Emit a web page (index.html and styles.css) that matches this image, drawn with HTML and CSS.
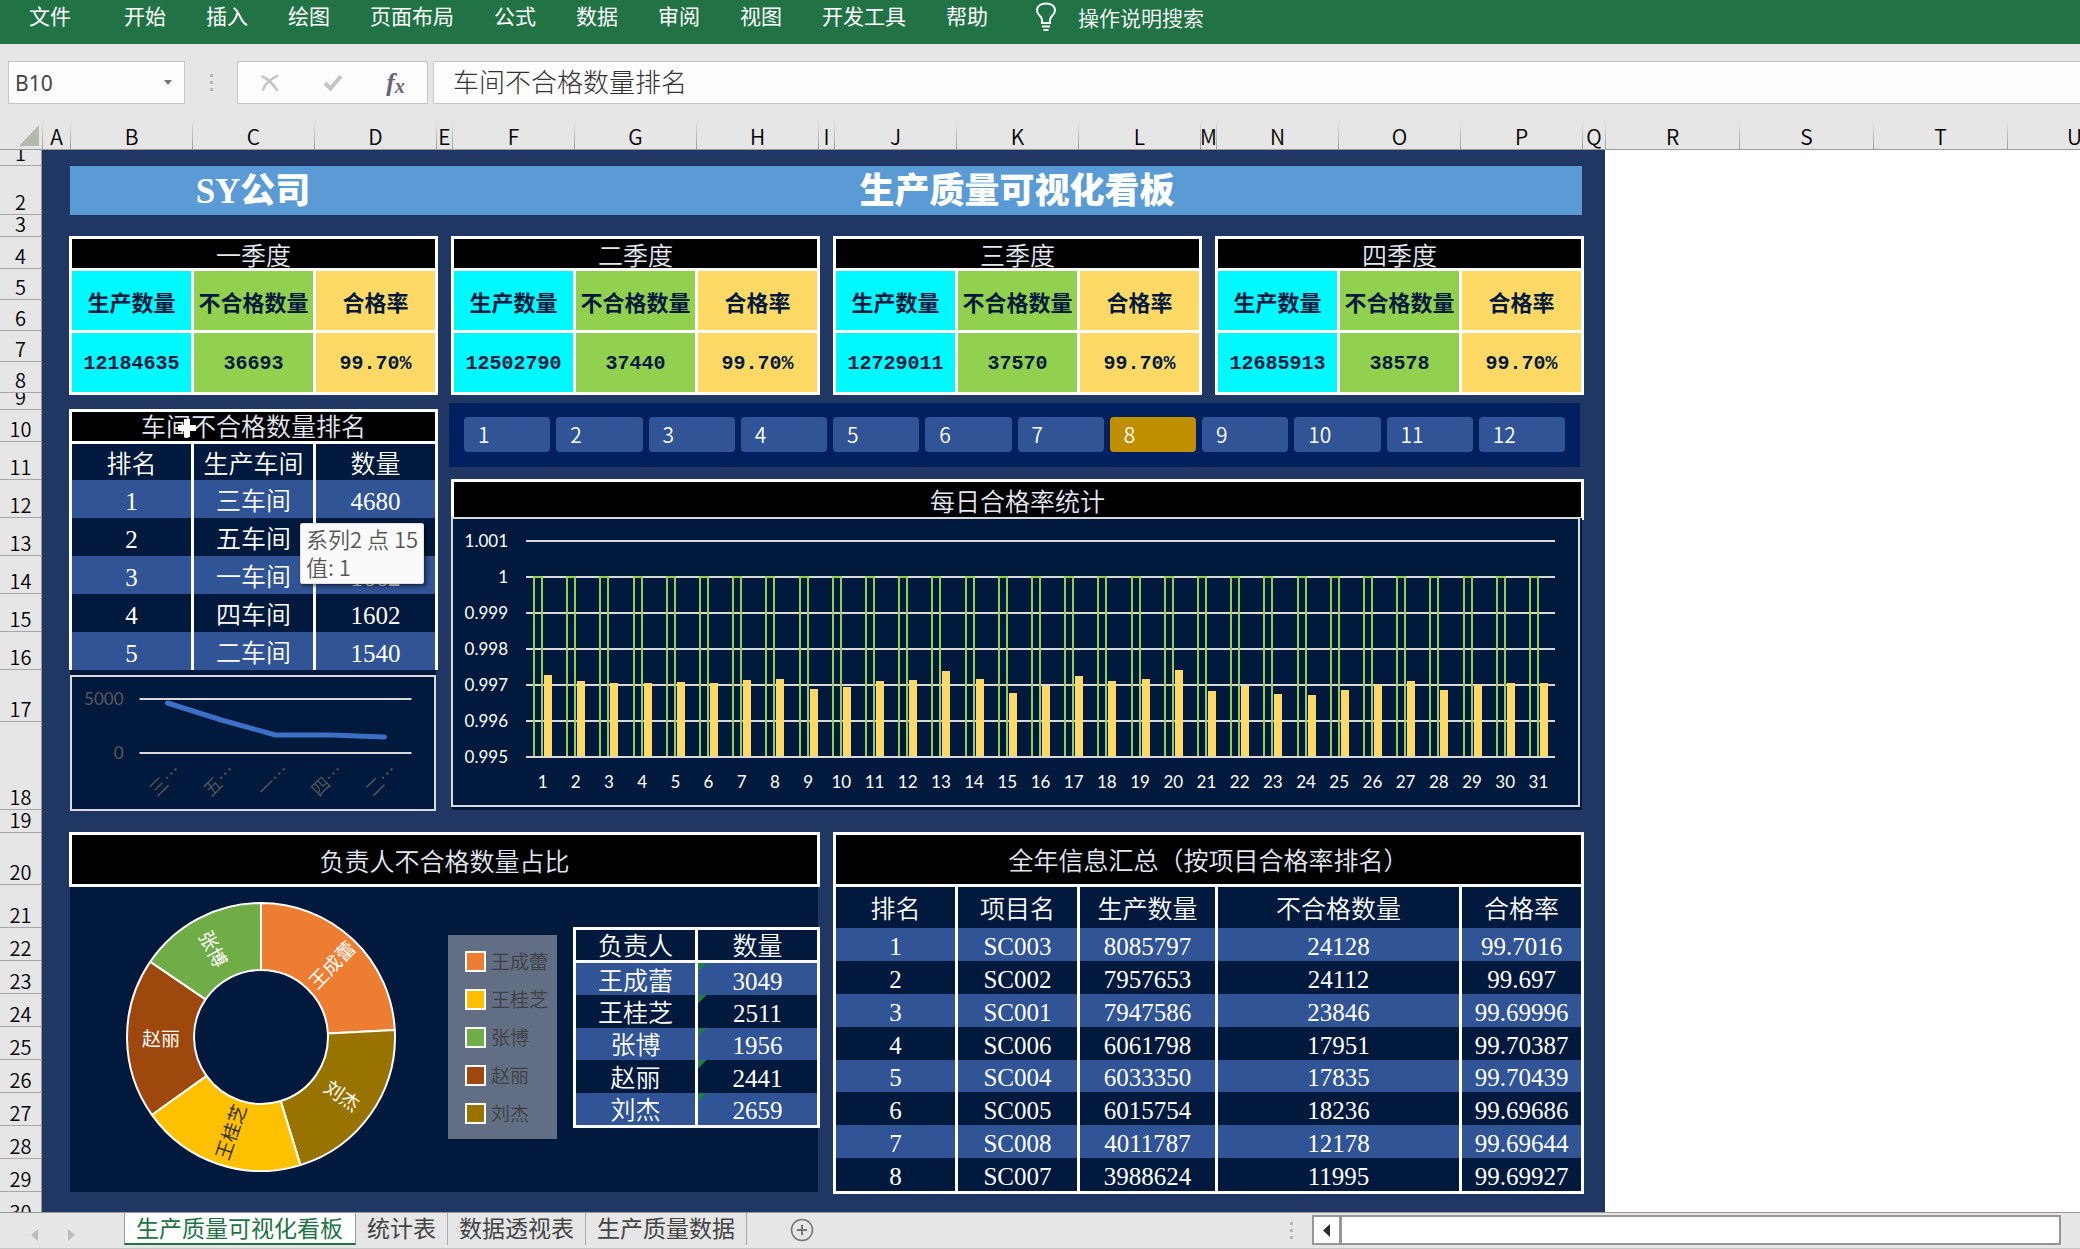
FILE: index.html
```html
<!DOCTYPE html>
<html lang="zh-CN">
<head>
<meta charset="utf-8">
<title>生产质量可视化看板</title>
<link rel="stylesheet" href="styles.css">
</head>
<body>
<nav class="ribbon" aria-label="功能区">
  <button class="file" type="button">文件</button>
  <button type="button">开始</button>
  <button type="button">插入</button>
  <button type="button">绘图</button>
  <button type="button">页面布局</button>
  <button type="button">公式</button>
  <button type="button">数据</button>
  <button type="button">审阅</button>
  <button type="button">视图</button>
  <button type="button">开发工具</button>
  <button type="button">帮助</button>
  <button class="tell-me" type="button">
    <svg width="22" height="30" viewBox="0 0 22 30" fill="none" stroke="#fff" stroke-width="2"><path d="M7 21v-3C7 14 2 13 2 8.500C2 4 6 1.500 11 1.500S20 4 20 8.500C20 13 15 14 15 18v3zM7 24.500h8M8.500 28h5"/></svg>
    操作说明搜索
  </button>
</nav>

<div class="formula-bar">
  <div class="name-box">
    <input type="text" value="B10" aria-label="名称框">
    <svg width="8" height="5" viewBox="0 0 8 5"><path d="M0 0h8L4 5z" fill="#777"/></svg>
  </div>
  <div class="dots"><i></i><i></i><i></i></div>
  <div class="fx-box">
    <button type="button" aria-label="取消"><svg width="18" height="18" viewBox="0 0 18 18" fill="none" stroke="#c4c4c4" stroke-linecap="round"><path d="M1.500 2.500C7 5 12 10 16 16" stroke-width="2.500"/><path d="M16 2C10 5 4 10 2 15.500" stroke-width="2.500"/></svg></button>
    <button type="button" aria-label="输入"><svg width="20" height="18" viewBox="0 0 20 18" fill="none" stroke="#c4c4c4" stroke-width="4"><path d="M2 9l5.500 5.500L18 2"/></svg></button>
    <button class="fx" type="button" aria-label="插入函数">f<small>x</small></button>
  </div>
  <input class="formula" type="text" value="车间不合格数量排名" aria-label="编辑栏">
</div>

<main class="viewport">
<div class="sheet">
  <div class="corner"><svg width="20" height="21" viewBox="0 0 20 21"><path d="M20 0v21H0z" fill="#b3b9af"/></svg></div>
  <div class="col">A</div><div class="col">B</div><div class="col">C</div><div class="col">D</div><div class="col">E</div><div class="col">F</div><div class="col">G</div><div class="col">H</div><div class="col">I</div><div class="col">J</div><div class="col">K</div><div class="col">L</div><div class="col">M</div><div class="col">N</div><div class="col">O</div><div class="col">P</div><div class="col">Q</div><div class="col">R</div><div class="col">S</div><div class="col">T</div><div class="col">U</div>
  <div class="rows">
    <div>1</div><div>2</div><div>3</div><div>4</div><div>5</div><div>6</div><div>7</div><div>8</div><div>9</div><div>10</div><div>11</div><div>12</div><div>13</div><div>14</div><div>15</div><div>16</div><div>17</div><div>18</div><div>19</div><div>20</div><div>21</div><div>22</div><div>23</div><div>24</div><div>25</div><div>26</div><div>27</div><div>28</div><div>29</div><div>30</div>
  </div>

  <div class="board"></div>
  <header class="banner"><h2>SY公司</h2><h1>生产质量可视化看板</h1></header>

  <section class="quarter q1"><table>
    <tr><th class="cap" colspan="3">一季度</th></tr>
    <tr><th class="out">生产数量</th><th class="bad">不合格数量</th><th class="rate">合格率</th></tr>
    <tr><td class="out">12184635</td><td class="bad">36693</td><td class="rate">99.70%</td></tr>
  </table></section>
  <section class="quarter q2"><table>
    <tr><th class="cap" colspan="3">二季度</th></tr>
    <tr><th class="out">生产数量</th><th class="bad">不合格数量</th><th class="rate">合格率</th></tr>
    <tr><td class="out">12502790</td><td class="bad">37440</td><td class="rate">99.70%</td></tr>
  </table></section>
  <section class="quarter q3"><table>
    <tr><th class="cap" colspan="3">三季度</th></tr>
    <tr><th class="out">生产数量</th><th class="bad">不合格数量</th><th class="rate">合格率</th></tr>
    <tr><td class="out">12729011</td><td class="bad">37570</td><td class="rate">99.70%</td></tr>
  </table></section>
  <section class="quarter q4"><table>
    <tr><th class="cap" colspan="3">四季度</th></tr>
    <tr><th class="out">生产数量</th><th class="bad">不合格数量</th><th class="rate">合格率</th></tr>
    <tr><td class="out">12685913</td><td class="bad">38578</td><td class="rate">99.70%</td></tr>
  </table></section>

  <section class="ranking"><table class="grid-table">
    <thead>
      <tr class="cap"><th colspan="3">车间不合格数量排名</th></tr>
      <tr><th>排名</th><th>生产车间</th><th>数量</th></tr>
    </thead>
    <tbody>
      <tr><td>1</td><td>三车间</td><td>4680</td></tr>
      <tr><td>2</td><td>五车间</td><td>3132</td></tr>
      <tr><td>3</td><td>一车间</td><td>1662</td></tr>
      <tr><td>4</td><td>四车间</td><td>1602</td></tr>
      <tr><td>5</td><td>二车间</td><td>1540</td></tr>
    </tbody>
  </table></section>

  <section class="trend">
    <svg viewBox="0 0 361 132" role="img" aria-label="车间不合格数量折线图">
      <path d="M67 22h272M67 76h272" stroke="#d9d9d9" stroke-width="2"/>
      <path d="M95 26L149 43L203 58H258L312 60" fill="none" stroke="#3d6fc6" stroke-width="5" stroke-linecap="round" stroke-linejoin="round"/>
      <g class="trend-y"><text x="51" y="28">5000</text><text x="51" y="82">0</text></g>
      <g class="trend-x">
        <text transform="translate(110 95) rotate(-45)">三…</text>
        <text transform="translate(164 95) rotate(-45)">五…</text>
        <text transform="translate(218 95) rotate(-45)">一…</text>
        <text transform="translate(272 95) rotate(-45)">四…</text>
        <text transform="translate(326 95) rotate(-45)">二…</text>
      </g>
    </svg>
  </section>

  <div class="slicer" role="group" aria-label="月份">
    <button type="button">1</button><button type="button">2</button><button type="button">3</button><button type="button">4</button><button type="button">5</button><button type="button">6</button><button type="button">7</button><button type="button" class="on">8</button><button type="button">9</button><button type="button">10</button><button type="button">11</button><button type="button">12</button>
  </div>

  <h3 class="panel-title daily-title">每日合格率统计</h3>
  <section class="daily">
    <div class="daily-chart">
      <ol class="y-axis"><li>1.001</li><li>1</li><li>0.999</li><li>0.998</li><li>0.997</li><li>0.996</li><li>0.995</li></ol>
      <div class="plot">
        <div><i></i><b style="height:81px"></b></div>
        <div><i></i><b style="height:75px"></b></div>
        <div><i></i><b style="height:73px"></b></div>
        <div><i></i><b style="height:73px"></b></div>
        <div><i></i><b style="height:74px"></b></div>
        <div><i></i><b style="height:73px"></b></div>
        <div><i></i><b style="height:76px"></b></div>
        <div><i></i><b style="height:77px"></b></div>
        <div><i></i><b style="height:67px"></b></div>
        <div><i></i><b style="height:69px"></b></div>
        <div><i></i><b style="height:75px"></b></div>
        <div><i></i><b style="height:76px"></b></div>
        <div><i></i><b style="height:85px"></b></div>
        <div><i></i><b style="height:77px"></b></div>
        <div><i></i><b style="height:63px"></b></div>
        <div><i></i><b style="height:70px"></b></div>
        <div><i></i><b style="height:80px"></b></div>
        <div><i></i><b style="height:75px"></b></div>
        <div><i></i><b style="height:77px"></b></div>
        <div><i></i><b style="height:86px"></b></div>
        <div><i></i><b style="height:65px"></b></div>
        <div><i></i><b style="height:70px"></b></div>
        <div><i></i><b style="height:62px"></b></div>
        <div><i></i><b style="height:61px"></b></div>
        <div><i></i><b style="height:66px"></b></div>
        <div><i></i><b style="height:71px"></b></div>
        <div><i></i><b style="height:75px"></b></div>
        <div><i></i><b style="height:66px"></b></div>
        <div><i></i><b style="height:71px"></b></div>
        <div><i></i><b style="height:73px"></b></div>
        <div><i></i><b style="height:73px"></b></div>
      </div>
      <ol class="x-axis"><li>1</li><li>2</li><li>3</li><li>4</li><li>5</li><li>6</li><li>7</li><li>8</li><li>9</li><li>10</li><li>11</li><li>12</li><li>13</li><li>14</li><li>15</li><li>16</li><li>17</li><li>18</li><li>19</li><li>20</li><li>21</li><li>22</li><li>23</li><li>24</li><li>25</li><li>26</li><li>27</li><li>28</li><li>29</li><li>30</li><li>31</li></ol>
    </div>
  </section>

  <h3 class="panel-title share-title">负责人不合格数量占比</h3>
  <section class="share">
    <svg class="donut" width="270" height="270" viewBox="-135 -135 270 270" role="img" aria-label="负责人不合格数量占比圆环图">
      <g stroke="#fff" stroke-width="2" stroke-linejoin="round">
        <path fill="#ed7d31" d="M0-134A134 134 0 0 1 133.800-7L66.900-3.500A67 67 0 0 0 0-67z"/>
        <path fill="#997300" d="M133.800-7A134 134 0 0 1 39.400 128.100L19.700 64A67 67 0 0 0 66.900-3.500z"/>
        <path fill="#ffc000" d="M39.400 128.100A134 134 0 0 1-109.100 77.800L-54.500 38.900A67 67 0 0 0 19.700 64z"/>
        <path fill="#9e480e" d="M-109.100 77.800A134 134 0 0 1-110.800-75.300L-55.400-37.700A67 67 0 0 0-54.500 38.900z"/>
        <path fill="#70ad47" d="M-110.800-75.300A134 134 0 0 1 0-134V-67A67 67 0 0 0-55.400-37.700z"/>
      </g>
      <g class="donut-labels">
        <text transform="translate(71 -72) rotate(-46)" y="7">王成蕾</text>
        <text transform="translate(81 59) rotate(35)" y="7">刘杰</text>
        <text class="dark" transform="translate(-30 95) rotate(-71)" y="7">王桂芝</text>
        <text transform="translate(-100 2)" y="7">赵丽</text>
        <text transform="translate(-48 -88) rotate(62)" y="7">张博</text>
      </g>
    </svg>
    <ul class="legend">
      <li class="c1">王成蕾</li><li class="c2">王桂芝</li><li class="c3">张博</li><li class="c4">赵丽</li><li class="c5">刘杰</li>
    </ul>
  </section>
  <section class="people"><table class="grid-table">
    <thead><tr><th>负责人</th><th>数量</th></tr></thead>
    <tbody>
      <tr><td>王成蕾</td><td>3049</td></tr>
      <tr><td>王桂芝</td><td>2511</td></tr>
      <tr><td>张博</td><td>1956</td></tr>
      <tr><td>赵丽</td><td>2441</td></tr>
      <tr><td>刘杰</td><td>2659</td></tr>
    </tbody>
  </table></section>

  <section class="summary"><table class="grid-table">
    <colgroup><col class="w1"><col class="w1"><col class="w2"><col class="w3"><col class="w4"></colgroup>
    <thead>
      <tr class="cap"><th colspan="5">全年信息汇总（按项目合格率排名）</th></tr>
      <tr><th>排名</th><th>项目名</th><th>生产数量</th><th>不合格数量</th><th>合格率</th></tr>
    </thead>
    <tbody>
      <tr><td>1</td><td>SC003</td><td>8085797</td><td>24128</td><td>99.7016</td></tr>
      <tr><td>2</td><td>SC002</td><td>7957653</td><td>24112</td><td>99.697</td></tr>
      <tr><td>3</td><td>SC001</td><td>7947586</td><td>23846</td><td>99.69996</td></tr>
      <tr><td>4</td><td>SC006</td><td>6061798</td><td>17951</td><td>99.70387</td></tr>
      <tr><td>5</td><td>SC004</td><td>6033350</td><td>17835</td><td>99.70439</td></tr>
      <tr><td>6</td><td>SC005</td><td>6015754</td><td>18236</td><td>99.69686</td></tr>
      <tr><td>7</td><td>SC008</td><td>4011787</td><td>12178</td><td>99.69644</td></tr>
      <tr><td>8</td><td>SC007</td><td>3988624</td><td>11995</td><td>99.69927</td></tr>
    </tbody>
  </table></section>

  <div class="tooltip" role="tooltip">系列2 点 15<br>值: 1</div>
  <svg class="cursor" width="18" height="18" viewBox="0 0 18 18"><path d="M6 0h6v6h6v6h-6v6H6v-6H0V6h6z" fill="#fff"/></svg>
</div>
</main>

<footer class="tab-bar">
  <div class="tab-nav">
    <button type="button" aria-label="上一个"><svg width="7" height="12" viewBox="0 0 7 12"><path d="M7 0v12L0 6z" fill="#bdbdbd"/></svg></button>
    <button type="button" aria-label="下一个"><svg width="7" height="12" viewBox="0 0 7 12"><path d="M0 0v12l7-6z" fill="#bdbdbd"/></svg></button>
  </div>
  <button class="tab active" type="button">生产质量可视化看板</button>
  <button class="tab" type="button">统计表</button>
  <button class="tab" type="button">数据透视表</button>
  <button class="tab" type="button">生产质量数据</button>
  <button class="add" type="button" aria-label="新工作表"><svg width="24" height="24" viewBox="0 0 24 24" fill="none" stroke="#767676"><circle cx="12" cy="12" r="10.500" stroke-width="1.500"/><path d="M12 7v10M7 12h10" stroke-width="2"/></svg></button>
  <div class="dots"><i></i><i></i><i></i></div>
  <div class="scroll">
    <button type="button" aria-label="向左滚动"><svg width="7" height="13" viewBox="0 0 7 13"><path d="M7 0v13L0 6.500z" fill="#2b2b33"/></svg></button>
    <div class="thumb"></div>
  </div>
</footer>
</body>
</html>
```
FILE: styles.css
```css
* { box-sizing: border-box; }

:root {
  --ui: "Noto Sans CJK SC", "Noto Sans", sans-serif;
  --song: "Liberation Serif", "Noto Sans CJK SC", serif;
  --chrome: #e6e6e6;
  --navy: #00193c;
  --stripe: #305496;
  --rule: #d9d9d9;
}

body {
  margin: 0;
  height: 100vh;
  display: flex;
  flex-direction: column;
  overflow: hidden;
  background: #fff;
  font-family: var(--ui);
}

button, input { font: inherit; color: inherit; border: 0; padding: 0; margin: 0; background: none; }
ol, ul { list-style: none; margin: 0; padding: 0; }
h1, h2, h3 { margin: 0; }

/* Ribbon */
.ribbon {
  display: flex;
  gap: 40px;
  height: 44px;
  padding: 0 0 14px 29px;
  background: #217346;
  color: #fff;
  font-size: 21px;
  line-height: 30px;
  white-space: nowrap;
}
.ribbon .file { margin-right: 13px; }
.tell-me { display: flex; align-items: center; gap: 21px; margin-left: 7px; padding-top: 3px; font-weight: 350; }

/* Formula bar */
.formula-bar {
  display: flex;
  height: 66px;
  padding: 17px 0 6px 8px;
  background: var(--chrome);
}
.name-box, .fx-box, .formula { border: 1px solid #c6c6c6; background: #fdfdfd; }
.name-box { display: flex; align-items: center; width: 177px; padding: 0 12px 0 6px; color: #444; font-family: "Noto Sans", sans-serif; font-size: 21px; }
.name-box input { flex: 1; min-width: 0; }
.dots { display: flex; flex-direction: column; justify-content: center; gap: 4px; }
.dots i { width: 3px; height: 3px; background: #b4b9b0; }
.formula-bar .dots { width: 52px; align-items: center; }
.fx-box { display: flex; width: 191px; margin-right: 5px; }
.fx-box button { flex: 1; display: flex; align-items: center; justify-content: center; }
.fx { font: italic bold 26px/30px "Liberation Serif", serif; color: #6d6478; }
.fx small { font-size: 20px; padding-top: 6px; }
.formula { flex: 1; padding: 0 19px 4px; font-size: 26px; font-weight: 300; color: #333; }
.formula-bar > .formula { border-right: 0; min-width: 0; }

/* Worksheet */
.viewport { flex: 1; min-height: 0; overflow: hidden; }
.sheet {
  --row-sizes: 16px 49px 22px 32px 31px 31px 31px 31px 17px 32px 38px 38px 38px 38px 38px 38px 52px 88px 23px 52px 43px repeat(9, 33px);
  position: relative;
  display: grid;
  grid-template-columns: 42px 28px repeat(3, 122px) 16px repeat(3, 122px) 16px repeat(3, 122px) 16px repeat(3, 122px) 23px repeat(4, 134px);
  grid-template-rows: 40px var(--row-sizes);
}
.corner, .col { background: var(--chrome); border-bottom: 1px solid #999; }
.corner { display: flex; justify-content: flex-end; align-items: flex-end; padding: 0 3px 3px 0; }
.col {
  display: flex;
  justify-content: center;
  padding-top: 13px;
  overflow: hidden;
  border-left: 1px solid;
  border-image: linear-gradient(#e6e6e6 25%, #999) 1;
  font-size: 21px;
  font-weight: 350;
  line-height: 26px;
}
.rows {
  grid-area: 2 / 1 / 32 / 2;
  display: grid;
  grid-template-rows: var(--row-sizes);
  background: var(--chrome);
  border-right: 1px solid #999;
}
.rows div {
  display: flex;
  justify-content: center;
  align-items: flex-end;
  overflow: hidden;
  border-bottom: 1px solid #a6a6a6;
  font-size: 20px;
  font-weight: 350;
  line-height: 24px;
}

/* Dashboard panels, placed on worksheet cells */
.board { grid-area: 2 / 2 / 32 / 19; background: #203764; }
.banner {
  grid-area: 3 / 3 / 4 / 18;
  display: grid;
  grid-template-columns: subgrid;
  align-items: center;
  padding-top: 2px;
  background: #5b9bd5;
  color: #fff;
  text-align: center;
}
.banner h1, .banner h2 { font: 900 35px/46px "Liberation Serif", "Noto Sans CJK SC", serif; }
.banner h2 { grid-column: 1 / 4; }
.banner h1 { grid-column: 5 / 16; }

.quarter, .ranking, .people, .summary, .panel-title { margin: -1px -2px -2px -1px; }
.ranking { margin-bottom: 0; }
table { width: 100%; height: 100%; table-layout: fixed; }
th, td { padding: 0; font-weight: 350; white-space: nowrap; text-align: center; }

.quarter { grid-row: 5 / 10; }
.q1 { grid-column: 3 / 6; }
.q2 { grid-column: 7 / 10; }
.q3 { grid-column: 11 / 14; }
.q4 { grid-column: 15 / 18; }
.quarter table { border-spacing: 3px; background: #fff; }
.quarter th, .quarter td { height: 59px; color: #00193c; font-size: 22px; font-weight: 700; line-height: 28px; }
.quarter td { padding-top: 2px; font-family: "Liberation Mono", monospace; font-size: 20px; }
.quarter .cap { height: 29px; padding-top: 1px; background: #000; color: #e3e8f3; font-size: 25px; font-weight: 350; }
.out { background: #00f8ff; }
.bad { background: #92d050; }
.rate { background: #ffd966; }

.grid-table { border-spacing: 0; border-right: 3px solid #fff; background: var(--navy); color: #fff; font-family: var(--song); font-size: 25px; line-height: 26px; }
.grid-table th, .grid-table td { border-left: 3px solid #fff; padding-top: 5px; }
.grid-table tbody tr:nth-child(odd) { background: var(--stripe); }
.cap th { background: #000; color: #e3e8f3; border-top: 3px solid #fff; border-bottom: 3px solid #fff; }

.ranking { grid-area: 11 / 3 / 18 / 6; }
.ranking .cap th { height: 35px; padding-top: 2px; }
.ranking tr { height: 38px; }
.ranking thead tr:last-child { height: 36px; }
.ranking .cap { height: 35px; }

.trend { grid-area: 18 / 3 / 20 / 6; padding-top: 5px; background: var(--navy); }
.trend svg { display: block; width: 100%; height: 136px; border: 2px solid var(--rule); }
.trend text { fill: #595959; font-size: 18px; text-anchor: end; }
.trend-y text { font-family: Lato, sans-serif; font-size: 17px; }
.trend-x text { font-weight: 350; }

.slicer {
  grid-area: 10 / 7 / 13 / 18;
  display: grid;
  grid-template-columns: repeat(12, 1fr);
  gap: 6px;
  margin: 10px 2px 13px -3px;
  padding: 14px 15px 15px;
  background: #002060;
}
.slicer button { border-radius: 4px; padding: 0 0 2px 14px; background: var(--stripe); color: #fff; font-size: 21px; font-weight: 350; text-align: left; }
.slicer .on { background: #bf8f00; }

.panel-title {
  display: flex;
  align-items: center;
  justify-content: center;
  border: 3px solid #fff;
  background: #000;
  color: #e3e8f3;
  font-size: 25px;
  font-weight: 350;
  line-height: 28px;
}
.daily-title { grid-area: 13 / 7 / 14 / 18; }

.daily { grid-area: 14 / 7 / 20 / 18; display: grid; background: var(--navy); }
.daily-chart {
  display: grid;
  grid-template: 251px 1fr / 73px 1fr;
  margin: -1px 2px 3px -1px;
  padding-right: 23px;
  border: 2px solid var(--rule);
  background: var(--navy);
  color: #fff;
  font: 17px/36px Lato, sans-serif;
}
.y-axis { padding: 4px 18px 0 0; text-align: right; }
.plot {
  display: grid;
  grid-template-columns: repeat(31, 1fr);
  height: 218px;
  margin-top: 21px;
  padding-bottom: 2px;
  background: repeating-linear-gradient(var(--rule) 0 2px, transparent 2px 36px);
}
.plot div { display: flex; align-items: flex-end; justify-content: center; gap: 1px; }
.plot i { width: 10px; height: 180px; border: 2px solid #92d050; border-bottom: 0; }
.plot b { width: 8px; background: #ffd966; }
.x-axis { grid-column: 2; display: grid; grid-template-columns: repeat(31, 1fr); line-height: 24px; text-align: center; }

.share-title { grid-area: 21 / 3 / 22 / 10; }
.share { grid-area: 22 / 3 / 31 / 10; display: flex; align-items: flex-start; gap: 52px; padding: 17px 0 0 56px; background: var(--navy); }
.donut-labels text { fill: #fff; font-size: 19px; text-anchor: middle; }
.donut-labels .dark { fill: #333; }
.legend {
  display: grid;
  align-content: center;
  width: 109px;
  height: 204px;
  margin-top: 33px;
  padding-left: 17px;
  background: #616e84;
  color: #404040;
  font-size: 19px;
  font-weight: 350;
  line-height: 38px;
}
.legend li { display: flex; align-items: center; gap: 5px; white-space: nowrap; }
.legend li::before { content: ""; flex: none; width: 17px; height: 17px; border: 2px solid #fff; background: var(--key); }
.c1 { --key: #ed7d31; }
.c2 { --key: #ffc000; }
.c3 { --key: #70ad47; }
.c4 { --key: #9e480e; }
.c5 { --key: #997300; }

.share-title, .summary { z-index: 1; }
.people { grid-area: 23 / 8 / 29 / 10; }
.people table { border-bottom: 3px solid #fff; }
.people th { height: 36px; border-top: 3px solid #fff; border-bottom: 3px solid #fff; padding-top: 4px; }
.people td + td { background: linear-gradient(135deg, #1f7d47 6px, transparent 6px) no-repeat; }

.summary { grid-area: 21 / 11 / 31 / 18; }
.summary table { border-bottom: 3px solid #fff; }
.summary .cap { height: 55px; }
.summary thead tr:last-child { height: 41px; }
.w1 { width: 122px; }
.w2 { width: 138px; }
.w3 { width: 244px; }
.w4 { width: 122px; }

/* Things floating over the worksheet */
.tooltip {
  position: absolute;
  z-index: 2;
  left: 300px;
  top: 413px;
  padding: 0 5px 3px 5px;
  border: 1px solid #e0e0e0;
  border-radius: 2px;
  background: #fafafa;
  box-shadow: 2px 2px 4px rgba(0, 0, 0, .6);
  color: #575757;
  font-size: 22px;
  font-weight: 350;
  line-height: 28px;
  white-space: nowrap;
}
.cursor { position: absolute; left: 178px; top: 309px; }

/* Sheet tabs */
.tab-bar {
  display: flex;
  height: 37px;
  border-top: 1px solid #999;
  border-bottom: 1px solid #c6c6c6;
  background: var(--chrome);
  color: #444;
  font-size: 23px;
  line-height: 28px;
}
.tab-nav { display: flex; align-items: center; gap: 30px; width: 124px; padding-left: 31px; }
.tab { height: 32px; padding: 0 11px 4px; white-space: nowrap; border-right: 1px solid #ababab; }
.tab.active { padding: 0 12px 2px 11px; border-right-color: #999; border-left: 1px solid #999; border-bottom: 2px solid #217346; background: #fff; color: #217346; }
.add { margin-left: 43px; padding-top: 2px; }
.tab-bar .dots { flex: 1; align-items: flex-end; padding-right: 19px; }
.scroll { display: flex; width: 749px; margin: 2px 19px 3px 0; border: 2px solid #9a9494; background: #fff; }
.scroll button { display: flex; align-items: center; justify-content: center; width: 28px; border-right: 3px solid #9a9494; }
.thumb { flex: 1; }
```
